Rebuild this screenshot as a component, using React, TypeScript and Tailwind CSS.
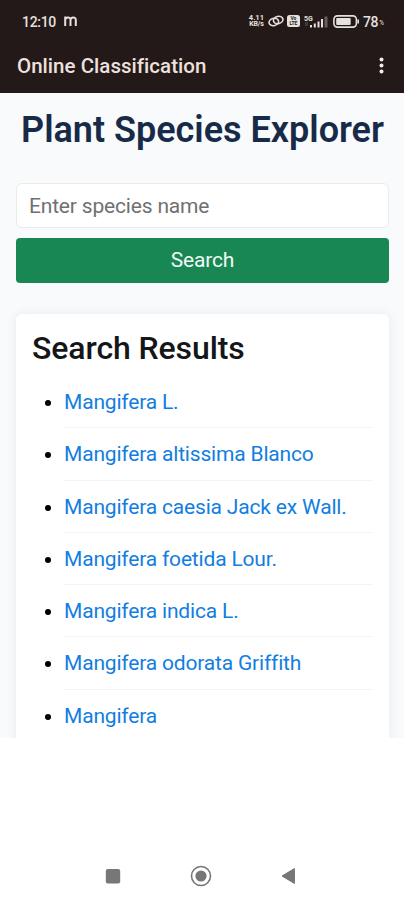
import React from 'react';

const SPECIES = [
  'Mangifera L.',
  'Mangifera altissima Blanco',
  'Mangifera caesia Jack ex Wall.',
  'Mangifera foetida Lour.',
  'Mangifera indica L.',
  'Mangifera odorata Griffith',
  'Mangifera',
];

const StatusBar: React.FC = () => (
  <div className="flex h-[42px] items-center pl-[22px] pr-5 text-[#e6e0df]">
    <span className="w-[42px] pt-px text-[14px] font-medium leading-none tracking-[-0.3px]">12:10</span>
    <svg width="13" height="12" viewBox="0 0 13 12" fill="none" stroke="currentColor" strokeWidth="2">
      <path d="M1.2 11V1.5M1.2 5Q1.2 2.5 3.9 2.5T6.5 5V11M6.5 5Q6.5 2.5 9.2 2.5T11.8 5V11" />
    </svg>
    <div className="ml-auto flex items-center">
      <div className="w-[17px] text-center text-[7.5px] font-bold leading-[6.5px]">
        <div>4.11</div>
        <div className="text-[7px] tracking-[-0.2px]">KB/s</div>
      </div>
      <svg className="ml-[3px]" width="16" height="12" viewBox="0 0 16 12" fill="none" stroke="currentColor" strokeWidth="1.6">
        <ellipse cx="5.8" cy="7" rx="4.8" ry="3.6" transform="rotate(-15 5.8 7)" />
        <ellipse cx="10.2" cy="5" rx="4.8" ry="3.6" transform="rotate(-15 10.2 5)" />
      </svg>
      <div className="ml-[3px] flex h-[12px] w-[13px] flex-col items-center justify-center rounded-[2.5px] bg-[#e6e0df] text-[5px] font-bold leading-[5px] text-[#231918]">
        <span>Vo</span>
        <span>LTE</span>
      </div>
      <svg className="ml-1" width="25" height="13" viewBox="0 0 25 13" fill="currentColor">
        <text x="0" y="5.5" fontSize="7" fontWeight="700">5G</text>
        <path d="M1 8h3M1 10h3" stroke="currentColor" strokeWidth="0.8" opacity="0.4" />
        <path d="M6 10h2v2.5H6zM9.8 8.5h2v4h-2zM13.5 6.5h2v6h-2zM17 4h2v8.5h-2z" />
        <path d="M20.5 1.5h3v11h-3z" opacity="0.35" />
      </svg>
      <svg className="ml-1" width="27" height="13" viewBox="0 0 27 13" fill="none">
        <rect x="0.9" y="0.9" width="22.5" height="11.2" rx="3.5" stroke="currentColor" strokeWidth="1.6" />
        <rect x="3.2" y="3.1" width="14.5" height="6.8" rx="1" fill="currentColor" />
        <path d="M25.2 4.5v4" stroke="currentColor" strokeWidth="1.6" />
      </svg>
      <span className="ml-[3px] mr-px pt-px text-[14px] font-medium leading-none tracking-[-0.3px]">78</span>
      <span className="pt-1 text-[6.5px] leading-none">%</span>
    </div>
  </div>
);

const AppBar: React.FC = () => (
  <header className="h-[93px] shrink-0 bg-[#231918]">
    <StatusBar />
    <div className="flex h-[47px] items-center justify-between pl-[17px] pr-5">
      <h1 className="pt-px text-[20.5px] font-medium tracking-[0.03px] text-[#ede0de]">Online Classification</h1>
      <svg width="5" height="18" viewBox="0 0 5 18" fill="#f3eeed">
        <circle cx="2.5" cy="2.5" r="2" />
        <circle cx="2.5" cy="8.5" r="2" />
        <circle cx="2.5" cy="14.5" r="2" />
      </svg>
    </div>
  </header>
);

const Results: React.FC = () => (
  <section className="mt-[31px] flex-1 rounded-t-md bg-white px-4 pt-[13px] shadow-[0_0_12px_rgba(0,0,0,0.07)]">
    <h2 className="text-[32px] font-medium leading-[42px] tracking-[-0.1px] text-[#141619]">Search Results</h2>
    <ul className="mt-[7px] list-disc pl-8">
      {SPECIES.map(name => (
        <li key={name} className="h-[52.3px] border-b border-[#f3f4f5] text-[21px] leading-[52px] tracking-[-0.18px] text-black last:border-b-0">
          <a href="#" className="text-[#127ee0]">{name}</a>
        </li>
      ))}
    </ul>
  </section>
);

const NavBar: React.FC = () => (
  <nav className="flex flex-1 items-end justify-between bg-white pb-[13px] pl-[105px] pr-[108px]">
    <svg className="mb-[3px]" width="16" height="16" viewBox="0 0 16 16">
      <rect x="0.8" y="1" width="14.4" height="14.4" rx="2" fill="#777" />
    </svg>
    <svg width="22" height="22" viewBox="0 0 22 22">
      <circle cx="11" cy="11" r="9.5" fill="none" stroke="#777" strokeWidth="1.6" />
      <circle cx="11" cy="11" r="5.6" fill="#777" />
    </svg>
    <svg className="mb-[2px]" width="16" height="18" viewBox="0 0 16 18">
      <path d="M14.5 1.5v15L2 9z" fill="#777" stroke="#777" strokeWidth="1" strokeLinejoin="round" />
    </svg>
  </nav>
);

const App: React.FC = () => (
  <div className="flex h-[900px] w-[404px] flex-col overflow-hidden bg-white font-['Roboto',sans-serif]">
    <AppBar />
    <main className="flex h-[645px] shrink-0 flex-col overflow-hidden bg-[#f8fafc] pl-4 pr-[15px]">
      <h1 className="mt-[14px] whitespace-nowrap text-center text-4xl/[46px] font-semibold text-[#172b48]">
        Plant Species Explorer
      </h1>
      <input
        type="text"
        placeholder="Enter species name"
        className="mt-[30px] h-[45px] shrink-0 rounded-md border border-[#e9ebed] bg-white px-3 text-[21px] tracking-[-0.18px] placeholder:text-[#707070]"
      />
      <button className="mt-[10px] h-[45px] shrink-0 rounded bg-[#198754] text-[21px] tracking-[-0.18px] text-[#effaf3]">Search</button>
      <Results />
    </main>
    <NavBar />
  </div>
);

export default App;
